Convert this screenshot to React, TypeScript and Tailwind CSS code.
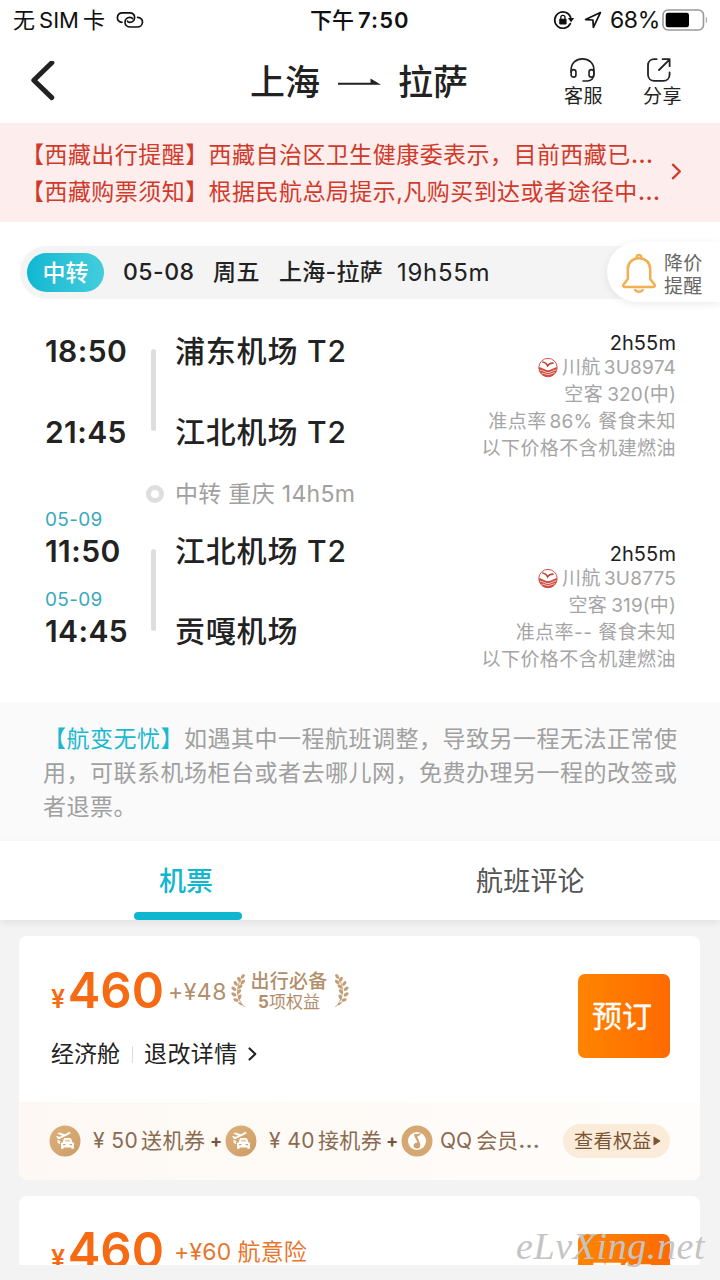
import React from "react";

const LinkIcon = () => (
  <svg width="28" height="18" viewBox="0 0 28 18" fill="none" stroke="#111" strokeWidth="1.7" strokeLinecap="round">
    <path d="M6 11.3C3.2 11.2 1.3 9.2 1.4 6.6C1.5 3.8 3.6 1.8 6.6 1.8H13.6C16.6 1.8 18.6 3.7 18.6 6.5C18.6 9.3 16.6 11.3 13.8 11.3C12 11.3 11.4 10.7 11.6 10" />
    <path d="M21.6 6.4C24.6 6.5 26.6 8.5 26.5 11.2C26.4 14 24.2 16 21.2 16H14.4C11.2 16 9 14 9 11.2C9 8.4 11 6.4 13.8 6.4C15.4 6.4 16.2 6.8 16.6 7.6" />
  </svg>
);

const RotationLock = () => (
  <svg width="22" height="20" viewBox="0 0 22 20" fill="none">
    <path d="M17.6 7.2A8.2 8.2 0 1 0 17.3 13.6" stroke="#111" strokeWidth="1.7" strokeLinecap="round" />
    <path d="M14.9 8H21.2L18.1 12.3Z" fill="#111" />
    <rect x="6.2" y="8.8" width="7.4" height="5.6" rx="0.8" fill="#111" />
    <path d="M7.8 9V7.4A2.1 2.1 0 0 1 12 7.4V9" stroke="#111" strokeWidth="1.3" />
  </svg>
);

const LocationArrow = () => (
  <svg width="18" height="18" viewBox="0 0 18 18" fill="none">
    <path d="M16.4 1.6L1.6 8.6L8.9 9L9.4 16.4Z" stroke="#111" strokeWidth="1.7" strokeLinejoin="round" />
  </svg>
);

const Battery = () => (
  <svg width="46" height="22" viewBox="0 0 46 22">
    <rect x="1" y="1" width="40.5" height="20" rx="5" fill="#fff" stroke="#999" strokeWidth="1.6" />
    <rect x="3.7" y="3.7" width="23.3" height="14.6" rx="2.4" fill="#000" />
    <path d="M43.8 7.6C45.6 8.6 45.6 13.4 43.8 14.4Z" fill="#aaa" />
  </svg>
);

const BackIcon = () => (
  <svg width="26" height="42" viewBox="0 0 26 42" fill="none" stroke="#222" strokeWidth="5" strokeLinecap="round" strokeLinejoin="round">
    <path d="M21.8 1.8L3.8 19.2L21.8 36.6" />
  </svg>
);

const RouteArrow = () => (
  <svg width="46" height="12" viewBox="0 0 46 12">
    <path d="M1 8.8H44L33.5 2.4V6.8H1Z" fill="#222" />
  </svg>
);

const Headset = () => (
  <svg width="27" height="26" viewBox="0 0 28 26" fill="none" stroke="#222" strokeWidth="1.7" strokeLinecap="round">
    <path d="M2.2 15V12.5C2.2 6 7.2 1.4 14 1.4S25.8 6 25.8 12.5V17C25.8 21.6 23 24.4 18.8 24.4H14.6" />
    <rect x="2.2" y="12.6" width="5" height="7.8" rx="2.5" />
    <rect x="20.8" y="12.6" width="5" height="7.8" rx="2.5" />
  </svg>
);

const Share = () => (
  <svg width="26" height="26" viewBox="0 0 26 26" fill="none" stroke="#222" strokeWidth="1.8" strokeLinecap="round" strokeLinejoin="round">
    <path d="M10.6 2.2H8.4C4.6 2.2 2 4.7 2 8.4V17.4C2 21.2 4.6 23.8 8.4 23.8H17.2C21 23.8 23.6 21.2 23.6 17.4V15.4" />
    <path d="M13 13L23.2 2.8M16.6 2.2H23.6V9.2" />
  </svg>
);

const Bell = () => (
  <svg width="36" height="42" viewBox="0 0 36 42" fill="none" stroke="#f2b052" strokeWidth="2.5" strokeLinecap="round" strokeLinejoin="round">
    <path d="M6.8 26V16.4C6.8 9.6 11.4 5.2 18 5.2S29.2 9.6 29.2 16.4V26L33.4 31.4C34.4 32.8 33.8 34 32 34H4C2.2 34 1.6 32.8 2.6 31.4Z" />
    <path d="M15.6 4.4A2.4 2.4 0 0 1 20.4 4.4" />
    <path d="M14.2 37A4.4 3.4 0 0 0 21.8 37" />
  </svg>
);

const Chevron = ({ color, w = 10, h = 16, s = 2.2 }: { color: string; w?: number; h?: number; s?: number }) => (
  <svg width={w} height={h} viewBox="0 0 10 16" fill="none" stroke={color} strokeWidth={s} strokeLinecap="round" strokeLinejoin="round">
    <path d="M1.6 1.6L8.2 8L1.6 14.4" />
  </svg>
);

const AirlineLogo = () => (
  <svg width="20" height="20" viewBox="0 0 20 20" fill="none">
    <circle cx="10" cy="9.6" r="9.2" fill="#fff" stroke="#d4564c" strokeWidth="1" />
    <path d="M1 9C4 9.4 7 12.2 10 12.2S16 9.4 19 9C19.4 14.6 15 18.8 10 18.8S0.6 14.6 1 9Z" fill="#cf4a40" />
    <path d="M2 12.2C5 12.2 7 14.6 10 14.6S15.4 12 18.4 11.8M3.6 15.2C6.6 15 8 16.8 10.4 16.6S14.6 14.8 16.8 14.6" stroke="#fff" strokeWidth="0.7" />
    <path d="M4.2 4C6.6 4.2 8.6 5.6 9.6 7.8C10.8 6 13 5 15.6 5.2" stroke="#b8473e" strokeWidth="1.6" />
  </svg>
);

const leaves = [
  [12.6, 3.4, -55], [8.6, 6.6, 60], [12.6, 9.4, -40], [5, 11, 50], [9.8, 14.2, -40], [3, 16.6, 40],
  [8.6, 19.6, -50], [3, 22.6, 35], [9.2, 25.4, -65], [5.2, 28.6, 20],
];

const Laurel = ({ flip = false }: { flip?: boolean }) => (
  <svg width="15" height="36" viewBox="0 0 16 38" className={flip ? "-scale-x-100" : ""}>
    {leaves.map(([x, y, r], i) => (
      <ellipse key={i} cx={x} cy={y} rx="2.9" ry="1.7" fill="#c39d74" transform={`rotate(${r} ${x} ${y})`} />
    ))}
    <path d="M12 4C5.4 13 4.6 27 14.5 36" stroke="#c39d74" strokeWidth="1" fill="none" />
    <path d="M7.4 30.6C9.6 30.6 11.4 32 12.4 34.2C10 34.2 8.2 33 7.4 30.6Z" fill="#c39d74" />
  </svg>
);

const RideIcon = () => (
  <svg width="32" height="32" viewBox="0 0 32 32">
    <defs>
      <linearGradient id="ride" x1="0" y1="0" x2="1" y2="1">
        <stop offset="0" stopColor="#dcb27c" />
        <stop offset="1" stopColor="#cd9c66" />
      </linearGradient>
    </defs>
    <circle cx="16" cy="16" r="15.5" fill="url(#ride)" />
    <path d="M7.2 11.6L8.4 11L10.6 12L13 10.8L8.4 8.4L10 7.6L16 9.2L19.4 7.4C20.6 6.8 21.6 7.2 21.4 8C21.2 8.6 20.4 9 19.6 9.4L10.4 14C9.6 14.2 9 14 8.6 13.6Z" fill="#fff" />
    <path d="M13.6 17.2L14.8 13.8C15 13.2 15.4 12.9 16 12.9H21C21.6 12.9 22 13.2 22.2 13.8L23.4 17.2L25 18V23.8H22.4V22.6H14.6V23.8H12V18Z" fill="#fff" />
    <path d="M15.8 16.4L16.4 14.7H20.6L21.2 16.4Z" fill="#e6c79e" />
    <path d="M14 19.6H16.4M20.6 19.6H23" stroke="#d2a26c" strokeWidth="1.4" />
    <path d="M8.4 15.4L10.6 16.6L9.2 17.4L11.2 18.8" stroke="#fff" strokeWidth="1.2" fill="none" />
  </svg>
);

const MusicIcon = () => (
  <svg width="32" height="32" viewBox="0 0 32 32">
    <circle cx="16" cy="16" r="15.5" fill="#d5a872" />
    <circle cx="16" cy="16" r="9" fill="#fff" />
    <path d="M13.2 8.8C15.4 9.6 18 9.2 20.2 7.8C19.8 10.2 17.8 11 16.2 11.6L18.6 17.4C20.4 20.6 18.8 23.6 16.2 23.6S12.2 22 12.6 20.2S14.8 17.4 16.6 17.6L13.8 12C13.2 10.8 13 9.8 13.2 8.8Z" fill="#d0a16c" />
  </svg>
);

function Stop({ time, date, place, className }: { time: string; date?: string; place: string; className: string }) {
  return (
    <div className={`flex items-end ${className}`}>
      <div className="w-[130px]">
        {date && <div className="h-[22px] text-[19px] leading-[22px] tracking-[0.3px] text-[#3ba9bd]">{date}</div>}
        <div className="h-[40px] text-[30px] leading-[40px] font-semibold tracking-[0.4px]">{time}</div>
      </div>
      <div className="h-[40px] text-[30px] leading-[40px] font-medium tracking-[0.8px]">{place}</div>
    </div>
  );
}

function FlightInfo({ no, plane, rate }: { no: string; plane: string; rate: React.ReactNode }) {
  return (
    <div className="flex flex-col items-end text-[19px] leading-[27px] tracking-[0.45px] text-[#a5a5a5]">
      <div className="h-[24px] text-[20px] leading-[26px] tracking-[0.1px] text-[#222]">2h55m</div>
      <div className="flex items-center gap-[4px]">
        <AirlineLogo />
        <span>川航<span className="ml-[3px] tracking-[0.2px]">{no}</span></span>
      </div>
      <div>空客<span className="ml-[4px] tracking-[0.1px]">{plane}</span></div>
      <div>准点率{rate} 餐食未知</div>
      <div>以下价格不含机建燃油</div>
    </div>
  );
}

function Price() {
  return (
    <div className="flex h-[60px] w-[113px] items-baseline font-semibold text-[#f56a12]">
      <span className="w-[18px] text-[25px] leading-[60px]">¥</span>
      <span className="text-[49px] leading-[60px] font-semibold">460</span>
    </div>
  );
}

const Book = () => (
  <div className="mt-[38px] flex h-[84px] w-[92px] shrink-0 items-center justify-center rounded-[7px] bg-linear-to-r from-[#ff8400] to-[#ff6a00] pt-[1px] pr-[4px] text-[30px] text-white [-webkit-text-stroke:0.3px_#fff]">
    预订
  </div>
);

export default function App() {
  return (
    <div className="relative flex h-[1280px] w-[720px] flex-col overflow-hidden bg-[#f3f3f3] font-['Inter','Noto_Sans_CJK_SC',sans-serif] whitespace-nowrap text-[#222]">
      {/* status bar */}
      <div className="flex h-[40px] shrink-0 items-center bg-white pl-[13px] text-[22px] leading-[40px] text-[#111]">
        <span className="w-[103px]">无<span className="mx-[4px]">SIM</span>卡</span>
        <LinkIcon />
        <span className="ml-[166px] w-[243px] font-medium">下午<span className="ml-[4px] font-semibold tracking-[1.1px]">7:50</span></span>
        <RotationLock />
        <span className="ml-[9px]"><LocationArrow /></span>
        <span className="ml-[8px] w-[52px] text-[23px] tracking-[-0.4px]">68%</span>
        <Battery />
      </div>

      {/* title bar */}
      <header className="flex h-[83px] shrink-0 items-center bg-white pl-[30px]">
        <BackIcon />
        <div className="ml-[194px] flex w-[314px] items-center text-[35px] leading-[60px] font-medium">
          <span className="w-[87px]">上海</span>
          <RouteArrow />
          <span className="ml-[15px]">拉萨</span>
        </div>
        <div className="flex w-[39px] flex-col items-center pt-[4px] text-[19px] leading-[26px] tracking-[0.4px]">
          <span className="mr-[3px] flex h-[27px]"><Headset /></span>
          <span>客服</span>
        </div>
        <div className="ml-[40px] flex w-[39px] flex-col items-center pt-[4px] text-[19px] leading-[26px] tracking-[0.4px]">
          <span className="mr-[8px] flex h-[27px]"><Share /></span>
          <span>分享</span>
        </div>
      </header>

      {/* travel notices */}
      <div className="flex h-[99px] shrink-0 items-center bg-[#fdeeed] pl-[21px] text-[23px] leading-[37px] tracking-[0.45px] text-[#d03a2b]">
        <div className="w-[650px] pt-[3px]">
          <div>【西藏出行提醒】西藏自治区卫生健康委表示，目前西藏已<span className="text-[26px] leading-[20px]">…</span></div>
          <div>【西藏购票须知】根据民航总局提示,凡购买到达或者途径中<span className="text-[26px] leading-[20px]">…</span></div>
        </div>
        <span className="-mt-[3px]"><Chevron color="#d03a2b" w={11} h={17} /></span>
      </div>

      {/* itinerary */}
      <section className="h-[480px] shrink-0 bg-white">
        <div className="flex h-[100px] items-center pl-[20px]">
          <div className="flex h-[53px] w-[640px] shrink-0 items-center rounded-l-full bg-[#f4f4f4] pl-[7px] text-[23px] leading-[53px] font-medium">
            <span className="flex h-[39px] w-[77px] items-center justify-center rounded-full bg-linear-to-r from-[#0cb8d2] to-[#42cddc] pt-[2px] text-white">中转</span>
            <span className="ml-[19px] w-[90px] tracking-[0.5px]">05-08</span>
            <span className="w-[66px] tracking-[0.4px]">周五</span>
            <span className="w-[118px] tracking-[0.3px]">上海-拉萨</span>
            <span className="text-[24px] font-normal tracking-[0.7px]">19h55m</span>
          </div>
          <div className="-ml-[53px] flex h-[60px] flex-1 items-center rounded-l-full bg-white pl-[14px] text-[19px] leading-[23px] text-[#666] shadow-[0_2px_8px_rgba(0,0,0,0.08)]">
            <span className="pt-[3px]"><Bell /></span>
            <div className="ml-[7px] pt-[5px] tracking-[0.3px]">降价<br />提醒</div>
          </div>
        </div>

        <div className="flex h-[380px] pl-[45px]">
          <div className="relative flex w-[340px] flex-col">
            <Stop className="h-[49px]" time="18:50" place="浦东机场 T2" />
            <Stop className="h-[81px]" time="21:45" place="江北机场 T2" />
            <div className="flex h-[43px] items-center pt-[40px] text-[23px] leading-[44px] text-[#a0a0a0]">
              <span className="ml-[101px] h-[18px] w-[18px] rounded-full border-[5px] border-[#dedede]" />
              <span className="ml-[11px] tracking-[0.3px]">中转 重庆 14h5m</span>
            </div>
            <Stop className="h-[76px]" date="05-09" time="11:50" place="江北机场 T2" />
            <Stop className="h-[80px]" date="05-09" time="14:45" place="贡嘎机场" />
            <span className="absolute top-[27px] left-[106px] h-[82px] w-[5px] rounded-full bg-[#dedede]" />
            <span className="absolute top-[227px] left-[106px] h-[82px] w-[5px] rounded-full bg-[#dedede]" />
          </div>
          <div className="flex w-[291px] flex-col gap-[79px] pt-[8px]">
            <FlightInfo no="3U8974" plane="320(中)" rate={<span className="ml-[3px] tracking-[0.2px]">86%</span>} />
            <FlightInfo no="3U8775" plane="319(中)" rate="--" />
          </div>
        </div>
      </section>

      {/* rescheduling guarantee */}
      <div className="h-[139px] shrink-0 bg-[#fafafa] pt-[21px] pl-[43px] text-[23px] leading-[33.8px] tracking-[0.5px] text-[#a0a0a0]">
        <div><span className="text-[#1cb8cf]">【航变无忧】</span>如遇其中一程航班调整，导致另一程无法正常使</div>
        <div>用，可联系机场柜台或者去哪儿网，免费办理另一程的改签或</div>
        <div>者退票。</div>
      </div>

      {/* tabs */}
      <div className="relative flex h-[79px] shrink-0 bg-white text-[27px] leading-[81px] shadow-[0_3px_8px_rgba(0,0,0,0.07)]">
        <div className="flex w-[242px] flex-col items-end">
          <span className="mr-[29px] h-[71px] font-medium text-[#12b6cf]">机票</span>
          <span className="h-[8px] w-[108px] rounded-[4px] bg-[#0fb6cf]" />
        </div>
        <span className="ml-[234px] tracking-[0.2px] text-[#555]">航班评论</span>
      </div>

      {/* fares */}
      <div className="mt-[16px] ml-[19px] h-[244px] w-[681px] shrink-0 overflow-hidden rounded-[8px] bg-white">
        <div className="flex h-[166px] pl-[32px]">
          <div className="w-[527px] pt-[25px]">
            <div className="flex h-[60px] items-center">
              <Price />
              <span className="ml-[4px] w-[63px] pt-[2px] text-[23px] leading-[60px] tracking-[0.5px] text-[#b28e6b]">+¥48</span>
              <Laurel />
              <div className="ml-[4px] flex w-[78px] flex-col items-center text-[#b28e6b]">
                <span className="text-[19px] leading-[21px] font-medium tracking-[0.3px]">出行必备</span>
                <span className="text-[17px] leading-[20px]"><b className="font-bold">5</b>项权益</span>
              </div>
              <span className="ml-[6px]"><Laurel flip /></span>
            </div>
            <div className="mt-[12px] flex items-center text-[23px] leading-[42px]">
              <span className="w-[81px]">经济舱</span>
              <span className="h-[17px] w-px bg-[#ddd]" />
              <span className="ml-[11px] w-[104px] tracking-[0.4px]">退改详情</span>
              <Chevron color="#222" w={9} h={14} s={2.4} />
            </div>
          </div>
          <Book />
        </div>
        <div className="flex h-[78px] items-center bg-linear-to-r from-[#fdf8f3] to-[#fffdfb] pl-[30px] text-[21px] leading-[40px] text-[#8a6a50]">
          <RideIcon />
          <span className="ml-[12px] w-[117px] tracking-[0.4px]">¥ 50<span className="ml-[3px]">送机券</span></span>
          <b className="w-[15px] text-[18px] font-bold text-[#7a543a]">+</b>
          <RideIcon />
          <span className="ml-[12px] w-[117px] tracking-[0.4px]">¥ 40<span className="ml-[3px]">接机券</span></span>
          <b className="w-[15px] text-[18px] font-bold text-[#7a543a]">+</b>
          <MusicIcon />
          <span className="ml-[7px] w-[123px]">QQ<span className="ml-[4px]">会员<span className="text-[25px] leading-[20px]">…</span></span></span>
          <span className="flex h-[34px] w-[107px] items-center rounded-full bg-[#faecd9] pl-[11px] text-[19px] tracking-[0.45px] text-[#7a5434]">
            <span className="pt-[1px]">查看权益</span>
            <svg width="8" height="10" viewBox="0 0 8 10" className="ml-[1px]"><path d="M0.5 1Q0.5 0.4 1.2 0.7L7 4.4Q7.6 5 7 5.6L1.2 9.3Q0.5 9.6 0.5 9Z" fill="#7a5434" /></svg>
          </span>
        </div>
      </div>

      <div className="mt-[16px] ml-[19px] flex h-[69px] w-[681px] shrink-0 overflow-hidden rounded-t-[8px] bg-white pl-[32px]">
        <div className="flex w-[527px] pt-[25px]">
          <Price />
          <span className="ml-[10px] pt-[1px] text-[23px] leading-[60px] tracking-[0.2px] text-[#e8752c]">+¥60<span className="ml-[6px]">航意险</span></span>
        </div>
        <Book />
      </div>

      <div className="absolute top-[1223px] left-[516px] font-['Liberation_Serif',serif] text-[38px] leading-[46px] tracking-[0.6px] text-[#c4c4c4] italic">eLvXing.net</div>
    </div>
  );
}
